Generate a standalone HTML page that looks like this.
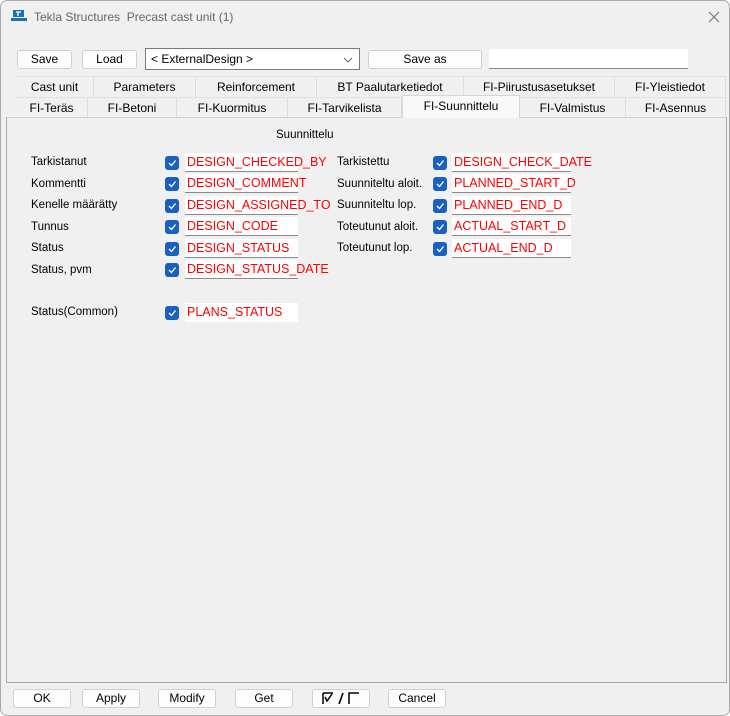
<!DOCTYPE html>
<html><head><meta charset="utf-8"><style>
*{box-sizing:border-box;margin:0;padding:0}
body{width:730px;height:716px;background:#fff;font-family:"Liberation Sans",sans-serif;font-size:12px;color:#000;position:relative;overflow:hidden}
.win{position:absolute;left:0;top:0;width:730px;height:716px;background:#f0f0f0;border:1px solid #a9a9a9;border-radius:7px}
.a{position:absolute;white-space:nowrap}
.btn{position:absolute;background:#fdfdfd;border:1px solid #d0d0d0;border-radius:3px;text-align:center;height:19px;line-height:17px;font-size:12px}
.tab{position:absolute;height:21px;line-height:20px;text-align:center;border-right:1px solid #dcdcdc;border-top:1px solid #e2e2e2;font-size:12px}
.lbl{position:absolute;font-size:11.5px;white-space:nowrap}
.cb{position:absolute;width:14px;height:14px;background:#1960c0;border-radius:3px}
.cb svg{position:absolute;left:2px;top:2px}
.fld{position:absolute;height:19px;background:#fff;border-bottom:1px solid #8a8a8a;color:#f00;font-size:12.5px;line-height:19px;padding-left:2px;white-space:nowrap;overflow:visible}
</style></head><body>
<div class="win">
<svg class="a" style="left:10px;top:9px" width="16" height="12" viewBox="0 0 16 12"><rect x="2" y="0" width="11" height="7" fill="#1d6fb8"/><rect x="0" y="8" width="16" height="3" fill="#1d6fb8"/><path d="M5 2h5M7 2v4" stroke="#fff" stroke-width="1.3"/></svg>
<div class="a" style="left:33px;top:9px;font-size:12px;color:#666">Tekla Structures&nbsp; Precast cast unit (1)</div>
<svg class="a" style="left:707px;top:10px" width="12" height="12"><path d="M1 1L11 11M11 1L1 11" stroke="#777" stroke-width="1.2"/></svg>

<div class="btn" style="left:16px;top:49px;width:55px">Save</div>
<div class="btn" style="left:81px;top:49px;width:55px">Load</div>
<div class="a" style="left:144px;top:47px;width:215px;height:22px;background:#fff;border:1px solid #7a7a7a;padding-left:5px;line-height:20px">&lt; ExternalDesign &gt;<svg style="position:absolute;right:6px;top:8px" width="10" height="6"><path d="M1 1L5 5L9 1" stroke="#666" fill="none"/></svg></div>
<div class="btn" style="left:367px;top:49px;width:114px">Save as</div>
<div class="a" style="left:488px;top:48px;width:199px;height:20px;background:#fff;border-bottom:1px solid #888"></div>

<div class="tab" style="left:15px;top:75px;width:78px">Cast unit</div>
<div class="tab" style="left:93px;top:75px;width:102px">Parameters</div>
<div class="tab" style="left:195px;top:75px;width:121px">Reinforcement</div>
<div class="tab" style="left:316px;top:75px;width:147px">BT Paalutarketiedot</div>
<div class="tab" style="left:463px;top:75px;width:151px">FI-Piirustusasetukset</div>
<div class="tab" style="left:614px;top:75px;width:111px">FI-Yleistiedot</div>
<div class="tab" style="left:15px;top:96px;width:72px">FI-Teräs</div>
<div class="tab" style="left:87px;top:96px;width:89px">FI-Betoni</div>
<div class="tab" style="left:176px;top:96px;width:111px">FI-Kuormitus</div>
<div class="tab" style="left:287px;top:96px;width:114px">FI-Tarvikelista</div>
<div class="tab" style="left:519px;top:96px;width:106px">FI-Valmistus</div>
<div class="tab" style="left:625px;top:96px;width:100px">FI-Asennus</div>

<div class="a" style="left:5px;top:116px;width:721px;height:566px;border:1px solid #a8a8a8;border-top-color:#d0d0d0;background:#f0f0f0"></div>
<div class="tab" style="left:401px;top:94px;width:118px;height:23px;background:#f9f9f9;border:1px solid #d6d6d6;border-bottom:none;line-height:21px">FI-Suunnittelu</div>

<div class="lbl" style="left:275px;top:128px">Suunnittelu</div>

<div class="lbl" style="left:30px;top:155px">Tarkistanut</div>
<div class="lbl" style="left:30px;top:177px">Kommentti</div>
<div class="lbl" style="left:30px;top:198px">Kenelle määrätty</div>
<div class="lbl" style="left:30px;top:220px">Tunnus</div>
<div class="lbl" style="left:30px;top:241px">Status</div>
<div class="lbl" style="left:30px;top:263px">Status, pvm</div>
<div class="lbl" style="left:30px;top:305px">Status(Common)</div>

<div class="cb" style="left:164px;top:155px"><svg width="10" height="10"><path d="M2 5L4.5 7.5L8.5 2.5" stroke="#fff" stroke-width="1.3" fill="none"/></svg></div>
<div class="cb" style="left:164px;top:176px"><svg width="10" height="10"><path d="M2 5L4.5 7.5L8.5 2.5" stroke="#fff" stroke-width="1.3" fill="none"/></svg></div>
<div class="cb" style="left:164px;top:198px"><svg width="10" height="10"><path d="M2 5L4.5 7.5L8.5 2.5" stroke="#fff" stroke-width="1.3" fill="none"/></svg></div>
<div class="cb" style="left:164px;top:219px"><svg width="10" height="10"><path d="M2 5L4.5 7.5L8.5 2.5" stroke="#fff" stroke-width="1.3" fill="none"/></svg></div>
<div class="cb" style="left:164px;top:241px"><svg width="10" height="10"><path d="M2 5L4.5 7.5L8.5 2.5" stroke="#fff" stroke-width="1.3" fill="none"/></svg></div>
<div class="cb" style="left:164px;top:262px"><svg width="10" height="10"><path d="M2 5L4.5 7.5L8.5 2.5" stroke="#fff" stroke-width="1.3" fill="none"/></svg></div>
<div class="cb" style="left:164px;top:305px"><svg width="10" height="10"><path d="M2 5L4.5 7.5L8.5 2.5" stroke="#fff" stroke-width="1.3" fill="none"/></svg></div>

<div class="fld" style="left:184px;top:152px;width:113px">DESIGN_CHECKED_BY</div>
<div class="fld" style="left:184px;top:173px;width:113px">DESIGN_COMMENT</div>
<div class="fld" style="left:184px;top:195px;width:113px">DESIGN_ASSIGNED_TO</div>
<div class="fld" style="left:184px;top:216px;width:113px">DESIGN_CODE</div>
<div class="fld" style="left:184px;top:238px;width:113px">DESIGN_STATUS</div>
<div class="fld" style="left:184px;top:259px;width:113px">DESIGN_STATUS_DATE</div>
<div class="fld" style="left:184px;top:302px;width:113px;border-bottom:none">PLANS_STATUS</div>

<div class="lbl" style="left:336px;top:155px">Tarkistettu</div>
<div class="lbl" style="left:336px;top:177px">Suunniteltu aloit.</div>
<div class="lbl" style="left:336px;top:198px">Suunniteltu lop.</div>
<div class="lbl" style="left:336px;top:220px">Toteutunut aloit.</div>
<div class="lbl" style="left:336px;top:241px">Toteutunut lop.</div>

<div class="cb" style="left:432px;top:155px"><svg width="10" height="10"><path d="M2 5L4.5 7.5L8.5 2.5" stroke="#fff" stroke-width="1.3" fill="none"/></svg></div>
<div class="cb" style="left:432px;top:176px"><svg width="10" height="10"><path d="M2 5L4.5 7.5L8.5 2.5" stroke="#fff" stroke-width="1.3" fill="none"/></svg></div>
<div class="cb" style="left:432px;top:198px"><svg width="10" height="10"><path d="M2 5L4.5 7.5L8.5 2.5" stroke="#fff" stroke-width="1.3" fill="none"/></svg></div>
<div class="cb" style="left:432px;top:219px"><svg width="10" height="10"><path d="M2 5L4.5 7.5L8.5 2.5" stroke="#fff" stroke-width="1.3" fill="none"/></svg></div>
<div class="cb" style="left:432px;top:241px"><svg width="10" height="10"><path d="M2 5L4.5 7.5L8.5 2.5" stroke="#fff" stroke-width="1.3" fill="none"/></svg></div>

<div class="fld" style="left:451px;top:152px;width:119px">DESIGN_CHECK_DATE</div>
<div class="fld" style="left:451px;top:173px;width:119px">PLANNED_START_D</div>
<div class="fld" style="left:451px;top:195px;width:119px">PLANNED_END_D</div>
<div class="fld" style="left:451px;top:216px;width:119px">ACTUAL_START_D</div>
<div class="fld" style="left:451px;top:238px;width:119px">ACTUAL_END_D</div>

<div class="btn" style="left:12px;top:688px;width:58px">OK</div>
<div class="btn" style="left:81px;top:688px;width:58px">Apply</div>
<div class="btn" style="left:157px;top:688px;width:58px">Modify</div>
<div class="btn" style="left:234px;top:688px;width:58px">Get</div>
<div class="btn" style="left:311px;top:688px;width:58px;font-size:15px;line-height:16px"><svg width="50" height="16" viewBox="0 0 50 16"><path d="M7 3H17M7 3V14M7 3" stroke="#000" stroke-width="1.5" fill="none"/><path d="M9 7L11 11L16 4" stroke="#000" stroke-width="1.5" fill="none"/><path d="M27 3L23 14" stroke="#000" stroke-width="1.6"/><path d="M33 14V3H43" stroke="#000" stroke-width="1.5" fill="none"/></svg></div>
<div class="btn" style="left:387px;top:688px;width:58px">Cancel</div>
</div>
</body></html>
